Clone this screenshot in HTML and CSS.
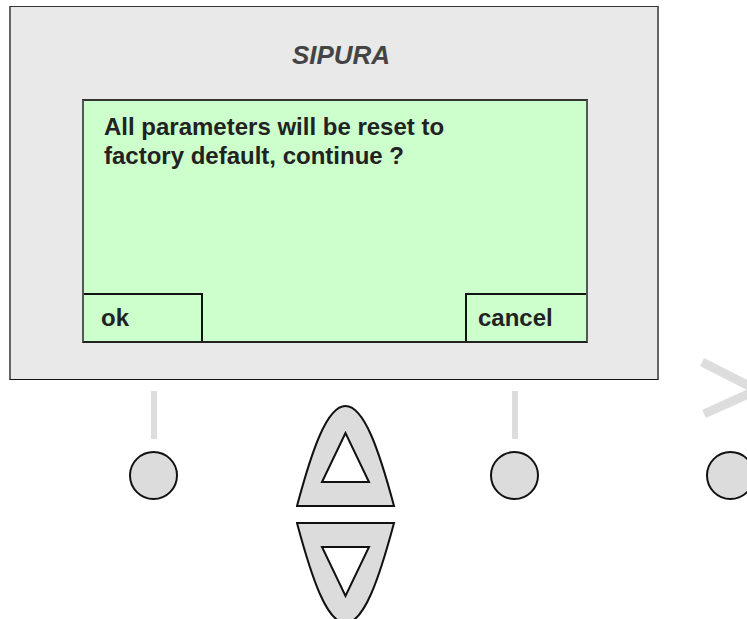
FILE: index.html
```html
<!DOCTYPE html>
<html lang="en">
<head>
    <meta charset="UTF-8">
    <link rel="stylesheet" href="styles.css">
</head>
<body>
    <div class="device">
        <div class="brand">SIPURA</div>
        <div class="screen">
            <p class="message">All parameters will be reset to<br>factory default, continue ?</p>
            <div class="softkeys">
                <div class="softkey softkey-left">ok</div>
                <div class="softkey softkey-right">cancel</div>
            </div>
        </div>
    </div>

    <div class="controls">
        <div class="key-col key-col-1">
            <span class="key-line"></span>
            <span class="key"></span>
        </div>

        <!-- up / down navigation -->
        <svg class="nav" width="100" height="219" viewBox="0 0 100 219">
            <path class="nav-shape" d="M1,101 C16,45 31,1 49.5,1 C68,1 83,45 98,101 Z"/>
            <polygon class="nav-arrow" points="49.5,28 26,77 73,77"/>
            <path class="nav-shape" d="M1,118 L98,118 C83,174 68,218 49.5,218 C31,218 16,174 1,118 Z"/>
            <polygon class="nav-arrow" points="26,142 73,142 49.5,191"/>
        </svg>

        <div class="key-col key-col-3">
            <span class="key-line"></span>
            <span class="key"></span>
        </div>
        <div class="key-col key-col-4">
            <span class="key"></span>
        </div>
    </div>

    <svg class="arrow-hint" width="67" height="90" viewBox="0 0 67 90">
        <polyline points="22,22 77,50 24,74"/>
    </svg>
</body>
</html>
```

FILE: styles.css
```css
body{
    margin: 0;
    height: 619px;
    overflow: hidden;
    background: #fff;
    font-family: "Liberation Sans", Arial, sans-serif;
    position: relative;
}

/* grey phone front with the lcd */
.device{
    margin: 6px 0 0 9px;
    width: 646px;
    height: 372px;
    background: #e9e9e9;
    border: 1px solid #333;
    border-left: 2px solid #666;
    border-right: 2px solid #666;
    border-bottom-color: #111;
}
.brand{
    margin-top: 35px;
    padding-left: 14px;
    font-size: 26px;
    line-height: 26px;
    font-weight: bold;
    font-style: italic;
    color: #444;
    text-align: center;
}
.screen{
    margin: 31px 0 0 71px;
    width: 502px;
    height: 240px;
    background: #ccffcc;
    border: 2px solid #555;
    border-top-color: #333;
    border-bottom-color: #222;
    display: flex;
    flex-direction: column;
    justify-content: space-between;
}
.message{
    margin: 0;
    padding: 11px 0 0 20px;
    font-size: 24px;
    line-height: 29px;
    font-weight: bold;
    color: #222;
}
.softkeys{
    display: flex;
    justify-content: space-between;
}
.softkey{
    box-sizing: border-box;
    height: 48px;
    line-height: 46px;
    font-size: 24px;
    font-weight: bold;
    color: #222;
    border-top: 2px solid #111;
}
.softkey-left{
    width: 119px;
    padding-left: 17px;
    border-right: 2px solid #111;
}
.softkey-right{
    width: 121px;
    padding-left: 11px;
    border-left: 2px solid #111;
}

/* buttons under the lcd */
.controls{
    display: flex;
    align-items: flex-start;
}
.key-col{
    flex-shrink: 0;
    width: 49px;
    margin-top: 11px;
    display: flex;
    flex-direction: column;
    align-items: center;
}
.key-col-1{
    margin-left: 129px;
}
.key-col-3{
    margin-left: 94px;
}
.key-col-4{
    margin-left: 167px;
    margin-top: 71px;
}
.key-line{
    width: 6px;
    height: 48px;
    background: #ddd;
}
.key{
    box-sizing: border-box;
    width: 49px;
    height: 49px;
    margin-top: 12px;
    border: 2px solid #111;
    border-radius: 50%;
    background: #dcdcdc;
}
.key-col-4 .key{
    margin-top: 0;
}
.nav{
    flex-shrink: 0;
    margin: 25px 0 0 118px;
}
.nav-shape{
    fill: #dcdcdc;
    stroke: #111;
    stroke-width: 2;
}
.nav-arrow{
    fill: #fff;
    stroke: #111;
    stroke-width: 2;
}

/* faded arrow at the right edge */
.arrow-hint{
    position: absolute;
    left: 680px;
    top: 340px;
}
.arrow-hint polyline{
    fill: none;
    stroke: #ddd;
    stroke-width: 9;
}
```
